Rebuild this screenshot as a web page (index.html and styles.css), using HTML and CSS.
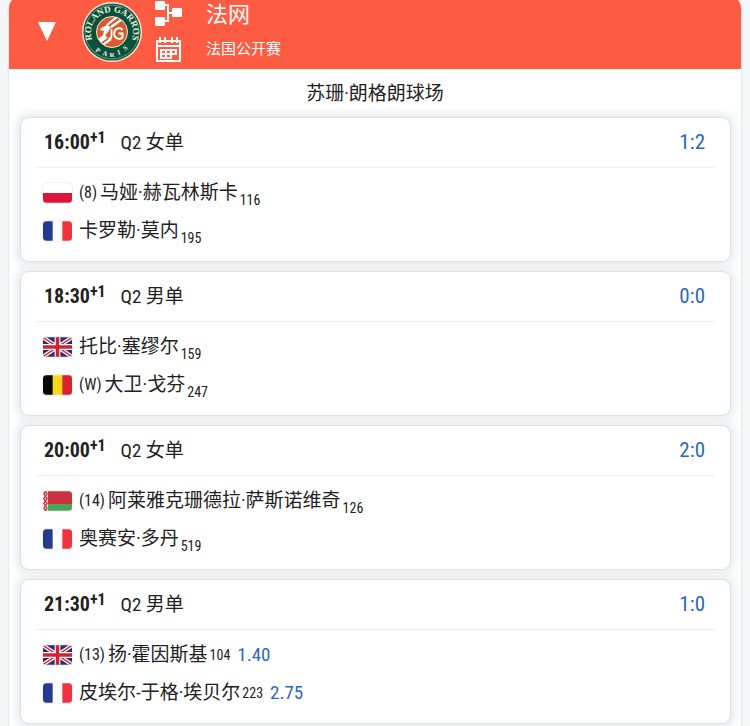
FILE: index.html
```html
<!DOCTYPE html>
<html lang="zh-CN">
<head>
<meta charset="utf-8">
<meta name="viewport" content="width=device-width, initial-scale=1">
<title>法网</title>
<link rel="stylesheet" href="styles.css">
</head>
<body>
<svg class="defs" width="0" height="0" aria-hidden="true">
  <symbol id="flag-pl" viewBox="0 0 30 20"><path fill="#fff" d="M0 0h30v20H0z"/><path fill="#dc143c" d="M0 10h30v10H0z"/></symbol>
  <symbol id="flag-fr" viewBox="0 0 30 20"><path fill="#fff" d="M0 0h30v20H0z"/><path fill="#233a8e" d="M0 0h10v20H0z"/><path fill="#f0313f" d="M20 0h10v20H20z"/></symbol>
  <symbol id="flag-be" viewBox="0 0 30 20"><path fill="#fbd619" d="M0 0h30v20H0z"/><path fill="#080808" d="M0 0h10v20H0z"/><path fill="#d8232f" d="M20 0h10v20H20z"/></symbol>
  <symbol id="flag-gb" viewBox="0 0 30 20"><path fill="#2b2d70" d="M0 0h30v20H0z"/><path stroke="#fff" stroke-width="4" d="M0 0l30 20M30 0L0 20"/><path stroke="#cf2a3c" stroke-width="1.4" d="M0 0l30 20M30 0L0 20"/><path stroke="#fff" stroke-width="6" d="M15 0v20M0 10h30"/><path stroke="#cf2233" stroke-width="3.6" d="M15 0v20M0 10h30"/></symbol>
  <symbol id="flag-by" viewBox="0 0 30 20"><path fill="#c8313e" d="M0 0h30v13H0z"/><path fill="#4aa657" d="M0 13h30v7H0z"/><path fill="#fff" d="M0 0h5v20H0z"/><path fill="none" stroke="#c8313e" stroke-width="1.4" d="M2.500 0L.8 2.500l1.700 2.500 1.700-2.500zM2.500 5L.8 7.500l1.700 2.500 1.700-2.500zM2.500 10L.8 12.500l1.700 2.500 1.700-2.500zM2.500 15L.8 17.500l1.700 2.500 1.700-2.500z"/></symbol>
</svg>
<main class="panel">
  <header class="tournament">
    <button class="toggle" type="button" aria-label="收起"><svg viewBox="0 0 18 19" width="18" height="19"><path fill="#fff" d="M0 0h18L9 19z"/></svg></button>
    <svg class="logo" viewBox="0 0 60 60" width="60" height="60" role="img" aria-label="Roland Garros Paris">
      <defs>
        <path id="arc-top" d="M11 40A21 21 0 1 1 49 40"/>
        <clipPath id="ball"><circle cx="30" cy="30" r="15"/></clipPath>
      </defs>
      <circle cx="30" cy="30" r="30" fill="#f5ead9"/>
      <circle cx="30" cy="30" r="28.600" fill="#07503a"/>
      <circle cx="30" cy="30" r="27" fill="none" stroke="#b9c4aa" stroke-width=".6"/>
      <circle cx="30" cy="30" r="15.500" fill="#d85a2c" stroke="#f5ead9" stroke-width="1"/>
      <g clip-path="url(#ball)" fill="none" stroke="#fff">
        <path stroke-width="2.200" d="M25 23L36 14M29 25L42 16"/>
        <path stroke-width="2.200" d="M15 42L25 35M18 45L29 37"/>
        <path fill="#fff" stroke="none" d="M19 26l6-3 4 2-3 5-2 2-1 4-6 3-1-2 5-4 1-4-4-1z"/>
        <path stroke-width="2" d="M40.500 28c-2-3-8-2-8.300 3-.3 5.500 5.500 7.500 8.300 4.500v-4h-4"/>
        <path stroke-width="1.800" d="M29.500 27v7c0 2-1 3-3 2.500"/>
      </g>
      <text class="logo-name"><textPath href="#arc-top" startOffset="50%">ROLAND GARROS</textPath></text>
      <text class="logo-city" x="15 22.500 30 37.500 45" y="49 53 54.500 53 49" rotate="36 17 0 -17 -36">PARIS</text>
    </svg>
    <nav class="tools">
      <a href="#draw" aria-label="签表"><svg viewBox="0 0 28 26" width="28" height="26"><path fill="none" stroke="#fff" stroke-width="2" d="M9 5h4v16H9M13 13h6"/><g fill="#fff"><rect y="1" width="10" height="9" rx="1"/><rect y="17" width="10" height="9" rx="1"/><rect x="17" y="8" width="10" height="9" rx="1"/></g></svg></a>
      <a href="#schedule" aria-label="赛程"><svg viewBox="0 0 28 26" width="28" height="26" fill="none" stroke="#fff"><path stroke-width="2" d="M2 4h23v20H2zM2 9h23"/><path stroke-width="2" d="M5 0v6M10 0v6M17 0v6M22 0v6"/><path stroke-width="2" d="M6 13h15v4h-5v4H6zM6 17h10M11 13v8M16 13v4"/></svg></a>
    </nav>
    <div class="titles">
      <h1>法网</h1>
      <p>法国公开赛</p>
    </div>
  </header>
  <h2 class="venue">苏珊·朗格朗球场</h2>
  <section class="matches">
    <article class="match">
      <div class="match-head"><time>16:00<sup>+1</sup></time><span class="round">Q2 女单</span><a class="score" href="#m1">1:2</a></div>
      <ul class="players">
        <li><svg class="flag"><use href="#flag-pl"/></svg><span class="seed">(8)</span><span>马娅·赫瓦林斯卡</span><span class="rank low">116</span></li>
        <li><svg class="flag"><use href="#flag-fr"/></svg><span>卡罗勒·莫内</span><span class="rank low">195</span></li>
      </ul>
    </article>
    <article class="match">
      <div class="match-head"><time>18:30<sup>+1</sup></time><span class="round">Q2 男单</span><a class="score" href="#m2">0:0</a></div>
      <ul class="players">
        <li><svg class="flag"><use href="#flag-gb"/></svg><span>托比·塞缪尔</span><span class="rank low">159</span></li>
        <li><svg class="flag"><use href="#flag-be"/></svg><span class="seed">(W)</span><span>大卫·戈芬</span><span class="rank low">247</span></li>
      </ul>
    </article>
    <article class="match">
      <div class="match-head"><time>20:00<sup>+1</sup></time><span class="round">Q2 女单</span><a class="score" href="#m3">2:0</a></div>
      <ul class="players">
        <li><svg class="flag"><use href="#flag-by"/></svg><span class="seed">(14)</span><span>阿莱雅克珊德拉·萨斯诺维奇</span><span class="rank low">126</span></li>
        <li><svg class="flag"><use href="#flag-fr"/></svg><span>奥赛安·多丹</span><span class="rank low">519</span></li>
      </ul>
    </article>
    <article class="match">
      <div class="match-head"><time>21:30<sup>+1</sup></time><span class="round">Q2 男单</span><a class="score" href="#m4">1:0</a></div>
      <ul class="players">
        <li><svg class="flag"><use href="#flag-gb"/></svg><span class="seed">(13)</span><span>扬·霍因斯基</span><span class="rank">104</span><a class="odds" href="#m4">1.40</a></li>
        <li><svg class="flag"><use href="#flag-fr"/></svg><span>皮埃尔-于格·埃贝尔</span><span class="rank">223</span><a class="odds" href="#m4">2.75</a></li>
      </ul>
    </article>
  </section>
</main>
</body>
</html>
```
FILE: styles.css
```css
* { box-sizing: border-box; }
body {
  margin: 0;
  padding: 0 9px;
  background: #f5f6f8;
  color: #222;
  font-family: "Roboto Condensed", Roboto, "Noto Sans CJK SC", sans-serif;
  font-size: 19px;
}
h1, h2, p, ul { margin: 0; padding: 0; font-weight: 400; }
a { color: inherit; text-decoration: none; }
svg { display: block; }
.defs { position: absolute; }

.panel {
  margin-top: -4px;
  background: #fff;
  border-radius: 12px 12px 0 0;
  box-shadow: 0 0 2px #b9c9ce;
  overflow: hidden;
}
.tournament {
  display: flex;
  align-items: flex-end;
  height: 73px;
  padding: 3px 29px 6px;
  background: #fd5b42;
  color: #fff;
}
.toggle {
  align-self: center;
  padding: 0;
  border: 0;
  background: none;
}
.logo { margin: 0 0 1px 26px; }
.logo-name, .logo-city {
  fill: #f3eedd;
  font-family: "Liberation Serif", serif;
  font-weight: 700;
  text-anchor: middle;
}
.logo-name { font-size: 9px; }
.logo-city { font-size: 7px; }
.tools {
  display: grid;
  gap: 11px;
  margin-left: 13px;
}
.titles { margin-left: 23px; }
h1 { font-size: 22px; line-height: 32px; }
.titles p { font-size: 15px; line-height: 24px; margin: 6px 0 2px; }

.venue {
  padding-top: 2px;
  font-size: 19px;
  line-height: 46px;
  text-align: center;
}
.matches {
  display: grid;
  gap: 9px;
  padding: 0 10px 12px 11px;
}
.match {
  height: 145px;
  padding: 0 15px;
  background: #fff;
  border: 1px solid #dbdfe1;
  border-radius: 9px;
  box-shadow: 0 0 8px 4px #e8ebec;
}
.match-head {
  display: flex;
  align-items: baseline;
  height: 50px;
  padding: 0 10px 0 8px;
  border-bottom: 1px solid #eeeff0;
  line-height: 49px;
}
time { font-size: 20px; font-weight: 700; }
sup { font-size: 16px; line-height: 0; vertical-align: 6px; }
.round { margin-left: 15px; }
.score { margin-left: auto; font-size: 21px; }
.score, .odds { color: #2a68c0; }
.players { padding-top: 6px; list-style: none; }
.players li {
  display: flex;
  align-items: center;
  height: 38px;
  padding-left: 7px;
  line-height: 28px;
}
.flag {
  width: 29px;
  height: 20px;
  margin-right: 7px;
  border-radius: 4px;
  box-shadow: 0 0 1px #777;
}
.seed { margin-right: 3px; font-size: 16px; }
.rank { margin-left: 2px; font-size: 14px; }
.low { padding-top: 13px; }
.odds { margin-left: 7px; }
```
